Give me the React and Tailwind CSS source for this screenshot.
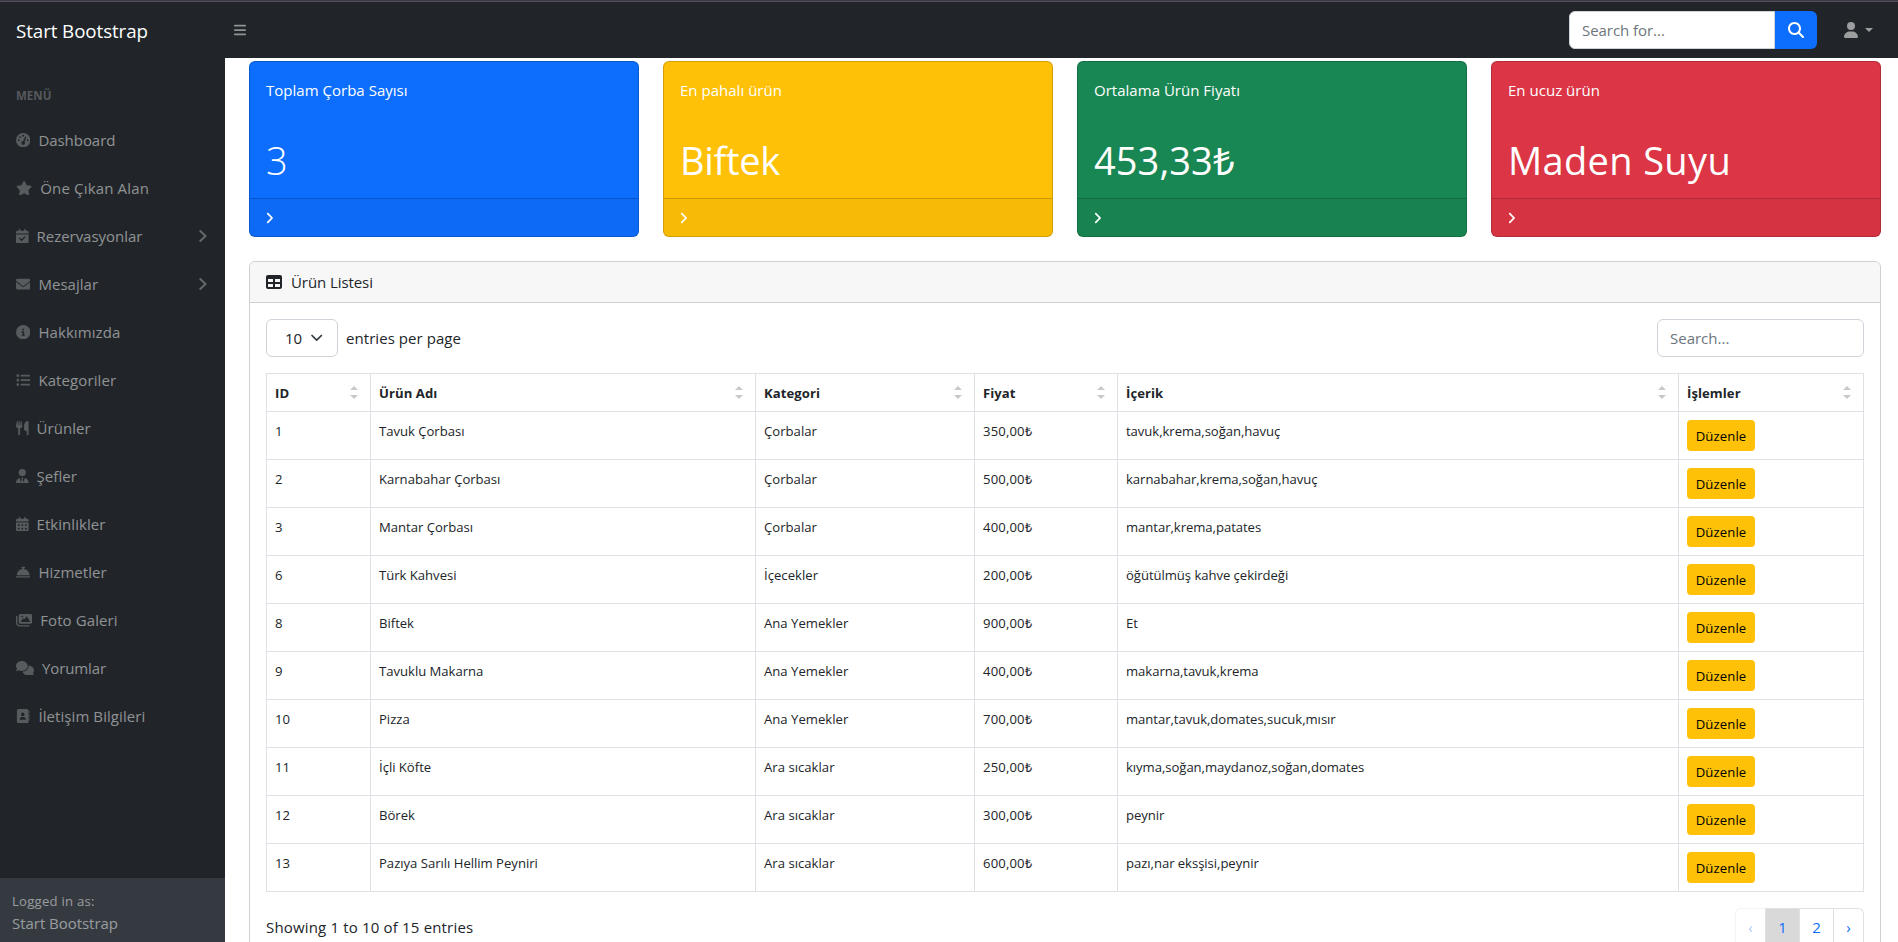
import {
  FaAddressBook,
  FaAngleRight,
  FaBars,
  FaBellConcierge,
  FaCalendarCheck,
  FaCalendarDays,
  FaCircleInfo,
  FaComments,
  FaEnvelope,
  FaGaugeHigh,
  FaImages,
  FaListUl,
  FaMagnifyingGlass,
  FaStar,
  FaTable,
  FaUser,
  FaUserTie,
  FaUtensils,
} from "react-icons/fa6";

const menu = [
  { label: "Dashboard", icon: FaGaugeHigh, width: "w-[14.4px]", tracking: "tracking-[-0.05px]" },
  { label: "Öne Çıkan Alan", icon: FaStar, width: "w-[16.2px]", tracking: "tracking-[0.17px]" },
  { label: "Rezervasyonlar", icon: FaCalendarCheck, width: "w-[12.6px]", tracking: "tracking-[-0.04px]", arrow: true },
  { label: "Mesajlar", icon: FaEnvelope, width: "w-[14.4px]", arrow: true },
  { label: "Hakkımızda", icon: FaCircleInfo, width: "w-[14.4px]", tracking: "tracking-[0.08px]" },
  { label: "Kategoriler", icon: FaListUl, width: "w-[14.4px]", tracking: "tracking-[0.1px]" },
  { label: "Ürünler", icon: FaUtensils, width: "w-[12.6px]" },
  { label: "Şefler", icon: FaUserTie, width: "w-[12.6px]" },
  { label: "Etkinlikler", icon: FaCalendarDays, width: "w-[12.6px]" },
  { label: "Hizmetler", icon: FaBellConcierge, width: "w-[14.4px]" },
  { label: "Foto Galeri", icon: FaImages, width: "w-[16.2px]", tracking: "tracking-[0.1px]" },
  { label: "Yorumlar", icon: FaComments, width: "w-[18px]", tracking: "tracking-[-0.12px]" },
  { label: "İletişim Bilgileri", icon: FaAddressBook, width: "w-[14.4px]", tracking: "tracking-[0.08px]" },
];

const cards = [
  { title: "Toplam Çorba Sayısı", value: "3", bg: "bg-[#0d6efd]", text: "font-light" },
  { title: "En pahalı ürün", value: "Biftek", bg: "bg-[#ffc107]", text: "tracking-[-0.3px]" },
  { title: "Ortalama Ürün Fiyatı", value: "453,33₺", bg: "bg-[#198754]", text: "tracking-[0.07px]" },
  { title: "En ucuz ürün", value: "Maden Suyu", bg: "bg-[#dc3545]", text: "tracking-[0.35px]" },
];

const columns = [
  { label: "ID", width: "w-[104px]" },
  { label: "Ürün Adı", width: "w-[385px]" },
  { label: "Kategori", width: "w-[219px]" },
  { label: "Fiyat", width: "w-[143px]" },
  { label: "İçerik", width: "w-[561px]" },
  { label: "İşlemler", width: "w-[185px]" },
];

const cellTracking = [
  "tracking-[0.04px]",
  "tracking-[-0.02px]",
  "tracking-[0.02px]",
  "tracking-[0.13px]",
  "tracking-[-0.05px]",
];

const products = [
  ["1", "Tavuk Çorbası", "Çorbalar", "350,00₺", "tavuk,krema,soğan,havuç"],
  ["2", "Karnabahar Çorbası", "Çorbalar", "500,00₺", "karnabahar,krema,soğan,havuç"],
  ["3", "Mantar Çorbası", "Çorbalar", "400,00₺", "mantar,krema,patates"],
  ["6", "Türk Kahvesi", "İçecekler", "200,00₺", "öğütülmüş kahve çekirdeği"],
  ["8", "Biftek", "Ana Yemekler", "900,00₺", "Et"],
  ["9", "Tavuklu Makarna", "Ana Yemekler", "400,00₺", "makarna,tavuk,krema"],
  ["10", "Pizza", "Ana Yemekler", "700,00₺", "mantar,tavuk,domates,sucuk,mısır"],
  ["11", "İçli Köfte", "Ara sıcaklar", "250,00₺", "kıyma,soğan,maydanoz,soğan,domates"],
  ["12", "Börek", "Ara sıcaklar", "300,00₺", "peynir"],
  ["13", "Pazıya Sarılı Hellim Peyniri", "Ara sıcaklar", "600,00₺", "pazı,nar eksşisi,peynir"],
];

function Navbar() {
  return (
    <header className="flex h-[58px] shrink-0 items-center border-t border-[#343e47] bg-[#212529]">
      <div className="flex h-full w-full items-center border-t border-[#5b4b59]">
        <a className="w-[225px] pt-[2px] pl-4 text-[18.75px] leading-[30px] tracking-[-0.08px] text-white">
          Start Bootstrap
        </a>
        <FaBars className="ml-[8px] size-[14px] text-white/50" />
        <div className="ml-auto flex h-[38px]">
          <input
            className="w-[206px] rounded-l-md border border-[#ced4da] bg-white px-3 text-[15px] tracking-[-0.05px] placeholder:text-[#6c757d]"
            placeholder="Search for..."
          />
          <button className="flex w-[42px] items-center justify-center rounded-r-md bg-[#0d6efd] text-white">
            <FaMagnifyingGlass className="size-4" />
          </button>
        </div>
        <div className="mr-[25px] ml-[27px] flex items-center gap-[7px] text-white/55">
          <FaUser className="h-4 w-[14px]" preserveAspectRatio="none" />
          <svg className="h-[4px] w-[8px]" viewBox="0 0 8 4" fill="currentColor">
            <path d="M0 0h8L4 4z" />
          </svg>
        </div>
      </div>
    </header>
  );
}

function Sidebar() {
  return (
    <nav className="flex w-[225px] shrink-0 flex-col bg-[#212529] text-white/50">
      <div className="flex-1">
        <div className="px-4 pt-[29px] pb-[11px] text-[11.5px] leading-[18px] font-bold text-white/25">
          MENÜ
        </div>
        {menu.map(({ label, icon: Icon, width, arrow, tracking }) => (
          <a key={label} className="flex h-12 items-center px-4">
            <span className={`${width} mr-2 flex shrink-0`}>
              <Icon className="h-[14.4px] w-full text-white/25" />
            </span>
            <span className={`text-[15px] leading-6 ${tracking ?? "tracking-[0.04px]"}`}>{label}</span>
            {arrow && (
              <svg
                className="mr-[2px] ml-auto h-[14px] w-[8px] text-white/30"
                viewBox="0 0 8 14"
                fill="none"
                stroke="currentColor"
                strokeWidth="2"
                strokeLinecap="round"
                strokeLinejoin="round"
              >
                <path d="M1.3 2 6.5 7l-5.2 5" />
              </svg>
            )}
          </a>
        ))}
      </div>
      <div className="h-16 bg-[#343a40] px-3 pt-[13px]">
        <div className="text-[13.125px] leading-[21px] tracking-[0.24px]">Logged in as:</div>
        <div className="-mt-px text-[15px] leading-6 tracking-[-0.04px]">Start Bootstrap</div>
      </div>
    </nav>
  );
}

function StatCard({ title, value, bg, text }) {
  return (
    <div className={`flex h-44 flex-col overflow-hidden rounded-md border border-black/18 text-white ${bg}`}>
      <div className="h-[136px] px-4 pt-4">
        <div className="text-[15px] leading-6 tracking-[0.02px]">{title}</div>
        <div className={`mt-[34px] text-[38px] leading-[48px] ${text}`}>{value}</div>
      </div>
      <div className="flex flex-1 items-center border-t border-black/18 bg-black/3 px-4">
        <FaAngleRight className="-ml-px h-[14px] w-[9px]" />
      </div>
    </div>
  );
}

function SortArrows() {
  return (
    <svg className="h-[13px] w-2 shrink-0 text-[#c8c9ca]" viewBox="0 0 8 13" fill="currentColor">
      <path d="M0 4h8L4 0zM0 9h8L4 13z" />
    </svg>
  );
}

function ProductTable() {
  return (
    <table className="mt-4 w-[1598px] table-fixed border-separate border-spacing-0 border-t border-l border-[#dee2e6] text-[13.125px] leading-[21px]">
      <thead>
        <tr>
          {columns.map(({ label, width }) => (
            <th key={label} className={`${width} h-[38px] border-r border-b border-[#dee2e6] py-0 pr-3 pl-2`}>
              <div className="flex items-center justify-between">
                <span className="pt-px font-bold tracking-[0.06px]">{label}</span>
                <SortArrows />
              </div>
            </th>
          ))}
        </tr>
      </thead>
      <tbody>
        {products.map((row) => (
          <tr key={row[0]}>
            {row.map((cell, index) => (
              <td
                key={index}
                className={`h-12 border-r border-b border-[#dee2e6] px-2 pt-[9px] pb-0 align-top ${cellTracking[index]}`}
              >
                {cell}
              </td>
            ))}
            <td className="h-12 border-r border-b border-[#dee2e6] px-2 pt-2 pb-0 align-top">
              <button className="block h-[31px] w-[68px] rounded bg-[#ffc107] pt-px text-center text-[13.125px] leading-[21px] tracking-[0.14px] text-black">
                Düzenle
              </button>
            </td>
          </tr>
        ))}
      </tbody>
    </table>
  );
}

function ProductPanel() {
  return (
    <section className="mt-6 h-[760px] w-[1632px] rounded-md border border-[#cfd0d1] bg-white">
      <div className="flex h-[41px] items-center rounded-t-md border-b border-[#cfd0d1] bg-[#f7f7f7] px-4">
        <FaTable className="h-4 w-4" />
        <h2 className="ml-[9px] text-[15px] leading-6 tracking-[-0.08px]">Ürün Listesi</h2>
      </div>
      <div className="px-4 pt-4">
        <div className="flex h-[38px] items-center">
          <div className="flex h-[38px] w-[72px] items-center rounded-md border border-[#ced4da] pl-[18px] text-[15px]">
            <span className="w-[17px]">10</span>
            <svg
              className="ml-[8px] h-3 w-[13px]"
              viewBox="0 0 13 12"
              fill="none"
              stroke="#343a40"
              strokeWidth="1.7"
              strokeLinecap="round"
              strokeLinejoin="round"
            >
              <path d="m2 3.5 4.7 4.7 4.7-4.7" />
            </svg>
          </div>
          <span className="ml-2 text-[15px] leading-6 tracking-[0.06px]">entries per page</span>
          <input
            className="ml-auto h-[38px] w-[207px] rounded-md border border-[#ced4da] bg-white px-3 text-[15px] placeholder:text-[#6c757d]"
            placeholder="Search..."
          />
        </div>
        <ProductTable />
        <div className="mt-4 flex h-10 items-start justify-between">
          <div className="pt-[7px] text-[15px] leading-6 tracking-[0.17px]">Showing 1 to 10 of 15 entries</div>
          <div className="flex h-10 text-center text-[15px] leading-[37px] text-[#0d6efd]">
            <span className="w-[30px] rounded-l-md border-t border-l border-[#f2f3f5] text-[#0d6efd]/40">‹</span>
            <span className="w-[34px] border-t border-l border-[#dee2e6] bg-[#d9d9d9]">1</span>
            <span className="w-[34px] border-t border-l border-[#dee2e6]">2</span>
            <span className="w-[31px] rounded-r-md border-x border-t border-[#dee2e6]">›</span>
          </div>
        </div>
      </div>
    </section>
  );
}

export default function App() {
  return (
    <div className="flex h-[942px] w-[1898px] flex-col overflow-hidden bg-white font-['Open_Sans','Noto_Sans',sans-serif] text-[#212529]">
      <Navbar />
      <div className="flex min-h-0 flex-1">
        <Sidebar />
        <main className="min-w-0 flex-1 overflow-hidden pt-[3px] pl-6">
          <div className="grid w-[1632px] grid-cols-4 gap-6">
            {cards.map((card) => (
              <StatCard key={card.title} {...card} />
            ))}
          </div>
          <ProductPanel />
        </main>
      </div>
    </div>
  );
}
